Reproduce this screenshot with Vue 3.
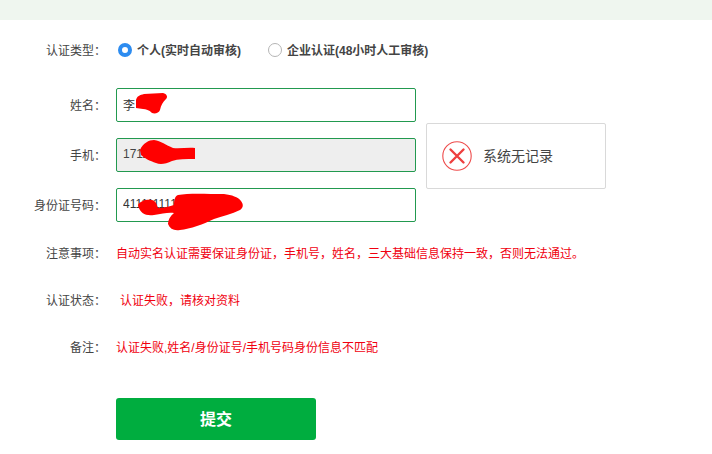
<template>
  <div class="page">
    <div class="top-bar"></div>
    <div class="form">
      <div class="row type-row">
        <label class="label">认证类型：</label>
        <div class="radios">
          <span class="radio-item">
            <i class="radio checked"></i>
            <b>个人(实时自动审核)</b>
          </span>
          <span class="radio-item">
            <i class="radio"></i>
            <b>企业认证(48小时人工审核)</b>
          </span>
        </div>
      </div>

      <div class="row input-row first">
        <label class="label">姓名：</label>
        <div class="field">
          <input class="input" value="李" />
          <svg class="scribble" width="60" height="34" viewBox="0 0 60 34">
            <path d="M20 12 C21 8 24 7 28 6 L47 5 C51 6 52 9 50 11 C47 14 45 17 44 22 C43 25 39 26 36 25 C33 22 30 21 27 21 L20 20 Z" fill="#ff0000" />
          </svg>
        </div>
        <div class="toast">
          <svg class="toast-icon" width="30" height="30" viewBox="0 0 30 30">
            <circle cx="15" cy="15" r="14.2" fill="none" stroke="#ee4b4b" stroke-width="1.1" />
            <path d="M8.5 8.5 L21.5 21.5 M21.5 8.5 L8.5 21.5" stroke="#ee3f3f" stroke-width="2.4" stroke-linecap="round" />
          </svg>
          <span>系统无记录</span>
        </div>
      </div>

      <div class="row input-row">
        <label class="label">手机：</label>
        <div class="field">
          <input class="input disabled" value="17111111111" disabled />
          <svg class="scribble" width="90" height="34" viewBox="0 0 90 34">
            <path d="M24 12 C27 5 33 2 38 2 C45 3 50 7 57 10 C64 11 72 9 79 10 L79 21 C70 21 62 21 56 23 C50 26 44 27 40 25 C34 23 28 20 25 17 Z" fill="#ff0000" />
          </svg>
        </div>
      </div>

      <div class="row input-row">
        <label class="label">身份证号码：</label>
        <div class="field">
          <input class="input" value="411111111111111111" />
          <svg class="scribble" width="140" height="50" viewBox="0 0 140 50">
            <path d="M22 17 C24 13 30 11 36 12 C40 13 41 17 42 20 C47 20 52 19 58 17 C58 12 59 8 62 7 C72 5 90 6 108 6 C116 7 122 9 125 13 C128 17 127 20 124 22 C116 26 106 28 98 31 C88 36 74 41 64 42 C58 43 54 41 52 36 C52 32 54 28 58 25 C52 24 46 26 38 27 C30 28 24 26 22 17 Z" fill="#ff0000" />
          </svg>
        </div>
      </div>

      <div class="row text-row notes">
        <label class="label">注意事项：</label>
        <p class="red">自动实名认证需要保证身份证，手机号，姓名，三大基础信息保持一致，否则无法通过。</p>
      </div>

      <div class="row text-row">
        <label class="label">认证状态：</label>
        <p class="red status">认证失败，请核对资料</p>
      </div>

      <div class="row text-row">
        <label class="label">备注：</label>
        <p class="red">认证失败,姓名/身份证号/手机号码身份信息不匹配</p>
      </div>

      <button class="submit">提交</button>
    </div>
  </div>
</template>

<script setup>
</script>

<style scoped>
.page {
  width: 712px;
  height: 454px;
  overflow: hidden;
  background: #fff;
  font-family: "Liberation Sans", "Noto Sans CJK SC", sans-serif;
  font-size: 12px;
  color: #333;
}

.top-bar {
  height: 20px;
  background: #eff6ef;
}

.form {
  position: relative;
  padding-top: 20px;
}

.row {
  display: flex;
  align-items: center;
}

.label {
  width: 106px;
  margin-right: 10px;
  padding-bottom: 2px;
  text-align: right;
  color: #444;
  white-space: nowrap;
}

.type-row {
  height: 20px;
}

.radios {
  display: flex;
  gap: 27px;
  margin-left: 2px;
  padding-bottom: 2px;
}

.radio-item {
  display: flex;
  align-items: center;
  gap: 5px;
}

.radio-item b {
  font-weight: 700;
  color: #444;
}

.radio {
  width: 14px;
  height: 14px;
  margin-top: 2px;
  box-sizing: border-box;
  border: 1px solid #b5b5b5;
  border-radius: 50%;
  background: #fff;
}

.radio.checked {
  border: 4.5px solid #2d8cf0;
  background: #fff;
}

.input-row {
  margin-top: 16px;
}

.input-row.first {
  position: relative;
  margin-top: 28px;
}

.field {
  position: relative;
  width: 300px;
  height: 34px;
}

.input {
  display: block;
  width: 100%;
  height: 100%;
  box-sizing: border-box;
  padding: 0 6px 2px;
  border: 1px solid #22994f;
  border-radius: 2px;
  background: #fff;
  font: inherit;
  color: #333;
  outline: none;
}

.input.disabled {
  background: #eee;
  color: #444;
}

.scribble {
  position: absolute;
  left: 0;
  top: 0;
}

.toast {
  position: absolute;
  left: 426px;
  top: 35px;
  display: flex;
  align-items: center;
  gap: 11px;
  width: 180px;
  height: 66px;
  box-sizing: border-box;
  padding: 0 0 0 15px;
  border: 1px solid #d9d9d9;
  border-radius: 2px;
  background: #fff;
  font-size: 14px;
  color: #444;
}

.toast span {
  padding-bottom: 2px;
}

.toast-icon {
  flex: none;
}

.text-row {
  height: 18px;
  margin-top: 29px;
}

.text-row.notes {
  margin-top: 22px;
}

.red {
  margin: 0;
  padding-bottom: 2px;
  color: #f0000f;
  white-space: nowrap;
}

.status {
  margin-left: 4px;
}

.submit {
  display: block;
  width: 200px;
  height: 42px;
  margin: 42px 0 0 116px;
  padding: 0 0 3px;
  border: none;
  border-radius: 3px;
  background: #00ad3f;
  color: #fff;
  font: inherit;
  font-size: 16px;
  font-weight: 700;
}
</style>
